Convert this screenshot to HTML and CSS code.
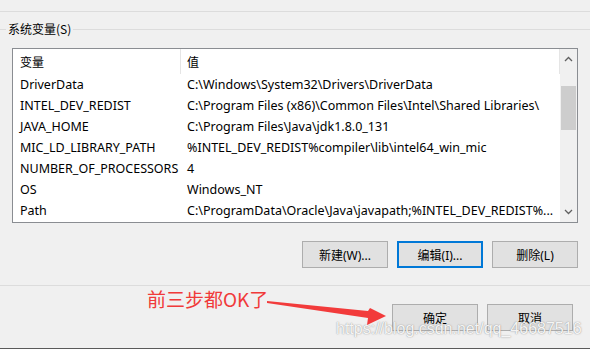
FILE: index.html
```html
<!DOCTYPE html>
<html>
<head>
<meta charset="utf-8">
<link rel="stylesheet" href="styles.css">
</head>
<body>
<div class="page">
  <div class="topline"></div>
  <div class="group-title"><span class="gt-lead"></span><span class="gt-text">系统变量(S)</span><span class="gt-rule"></span></div>
  <div class="listbox">
    <div class="list-main">
      <div class="lrow lhead"><div class="c1">变量</div><div class="c2">值</div></div>
      <div class="lrow"><div class="c1">DriverData</div><div class="c2">C:\Windows\System32\Drivers\DriverData</div></div>
      <div class="lrow"><div class="c1">INTEL_DEV_REDIST</div><div class="c2">C:\Program Files (x86)\Common Files\Intel\Shared Libraries\</div></div>
      <div class="lrow"><div class="c1">JAVA_HOME</div><div class="c2">C:\Program Files\Java\jdk1.8.0_131</div></div>
      <div class="lrow"><div class="c1">MIC_LD_LIBRARY_PATH</div><div class="c2">%INTEL_DEV_REDIST%compiler\lib\intel64_win_mic</div></div>
      <div class="lrow"><div class="c1">NUMBER_OF_PROCESSORS</div><div class="c2">4</div></div>
      <div class="lrow"><div class="c1">OS</div><div class="c2">Windows_NT</div></div>
      <div class="lrow"><div class="c1">Path</div><div class="c2">C:\ProgramData\Oracle\Java\javapath;%INTEL_DEV_REDIST%...</div></div>
    </div>
    <div class="vscroll">
      <div class="sb-btn"><svg width="9" height="6" viewBox="0 0 9 6"><path d="M1 5 L4.5 1.5 L8 5" fill="none" stroke="#606060" stroke-width="1.3"/></svg></div>
      <div class="sb-track"><div class="sb-thumb"></div></div>
      <div class="sb-btn"><svg width="9" height="6" viewBox="0 0 9 6"><path d="M1 1 L4.5 4.5 L8 1" fill="none" stroke="#606060" stroke-width="1.3"/></svg></div>
    </div>
  </div>
  <div class="btnrow list-btns">
    <div class="btn">新建(W)...</div>
    <div class="btn focus">编辑(I)...</div>
    <div class="btn">删除(L)</div>
  </div>
  <div class="sep"></div>
  <div class="btnrow foot-btns">
    <div class="btn">确定</div>
    <div class="btn">取消</div>
  </div>
  <div class="bottomline"></div>

  <div class="note">前三步都OK了</div>
  <svg class="arrow" width="590" height="349" viewBox="0 0 590 349">
    <polygon points="267,301 368,311 370,308 386,316 367,325 368,318 267,303" fill="#f23b3b"/>
  </svg>
  <div class="watermark">https://blog.csdn.net/qq_46687516</div>
</div>
</body>
</html>
```

FILE: styles.css
```css
html, body {
  margin: 0;
  padding: 0;
}
body {
  background: #f0f0f0;
  font-family: "Noto Sans", "Noto Sans CJK SC", sans-serif;
  font-size: 12px;
  color: #000;
}
.page {
  position: relative;
  width: 590px;
  height: 349px;
  overflow: hidden;
  display: flex;
  flex-direction: column;
}
.topline {
  margin-top: 11px;
  height: 1px;
  background: #dcdcdc;
}
.group-title {
  margin-top: 8px;
  height: 18px;
  display: flex;
  align-items: center;
}
.gt-lead {
  width: 6px;
  height: 1px;
  background: #dcdcdc;
}
.gt-text {
  padding: 0 2px 0 2px;
  line-height: 18px;
  font-family: "Noto Sans CJK SC", sans-serif;
}
.gt-rule {
  flex: 1;
  height: 1px;
  background: #dcdcdc;
}
.listbox {
  margin: 10px 0 0 12px;
  width: 566px;
  height: 175px;
  box-sizing: border-box;
  border: 1px solid #8a8d92;
  background: #fff;
  display: flex;
}
.list-main {
  flex: 1;
  overflow: hidden;
}
.lrow {
  display: flex;
  height: 21px;
  align-items: center;
  white-space: nowrap;
  font-size: 12.5px;
}
.lrow.lhead {
  height: 25px;
  font-size: 12px;
  font-family: "Noto Sans CJK SC", sans-serif;
}
.lhead .c1 {
  border-right: 1px solid #e5e5e5;
  height: 25px;
  display: flex;
  align-items: center;
}
.lhead .c2 {
  flex: 1;
  border-right: 1px solid #e5e5e5;
  height: 25px;
  display: flex;
  align-items: center;
}
.c1 {
  width: 168px;
  padding-left: 7px;
  box-sizing: border-box;
}
.c2 {
  padding-left: 6px;
}
.vscroll {
  width: 17px;
  background: #f0f0f0;
  display: flex;
  flex-direction: column;
}
.sb-btn {
  height: 20px;
  display: flex;
  align-items: center;
  justify-content: center;
}
.sb-track {
  flex: 1;
  padding-top: 17px;
}
.sb-thumb {
  height: 44px;
  background: #cdcdcd;
  margin: 0 1px;
}
.btnrow {
  display: flex;
  justify-content: flex-end;
  gap: 9px;
}
.list-btns {
  margin-top: 18px;
  padding-right: 12px;
}
.foot-btns {
  margin-top: 18px;
  padding-right: 17px;
}
.btn {
  width: 86px;
  height: 27px;
  box-sizing: border-box;
  border: 1px solid #adadad;
  background: #e1e1e1;
  display: flex;
  align-items: center;
  justify-content: center;
  font-family: "Noto Sans", "Noto Sans CJK SC", sans-serif;
}
.btn.focus {
  border: 2px solid #0078d7;
}
.sep {
  margin-top: 17px;
  height: 1px;
  background: #dcdcdc;
}
.bottomline {
  margin-top: auto;
  height: 1px;
  background: #5a5a5a;
}
.note {
  position: absolute;
  left: 147px;
  top: 286px;
  font-family: "Noto Sans CJK SC", sans-serif;
  font-size: 19px;
  line-height: 26px;
  color: #f03a3a;
}
.arrow {
  position: absolute;
  left: 0;
  top: 0;
}
.watermark {
  position: absolute;
  left: 336px;
  top: 320px;
  font-family: "Liberation Sans", Arial, sans-serif;
  font-size: 16px;
  color: rgba(255, 255, 255, 0.92);
  text-shadow: 0 0 1px rgba(110, 110, 110, 0.7), 0 0 2px rgba(150, 150, 150, 0.4);
  white-space: nowrap;
}
```
